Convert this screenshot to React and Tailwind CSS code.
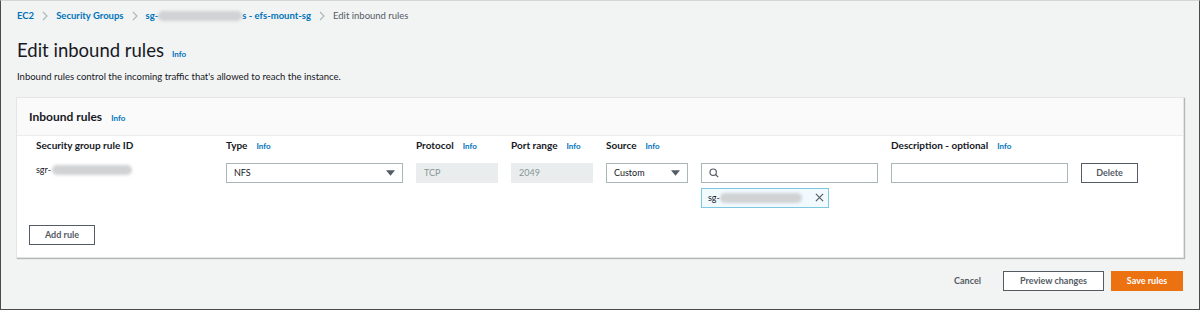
function Info({ className = "" }) {
  return <span className={`text-[8px] font-bold text-[#0073bb] ${className}`}>Info</span>;
}

function Blur({ className }) {
  return <span className={`inline-block h-[10px] rounded-full bg-[#d0d2d3] blur-[1.5px] ${className}`} />;
}

function Caret() {
  return (
    <svg viewBox="0 0 10 6" className="h-[6px] w-[9px]">
      <path d="M0 0h10L5 6z" fill="#545b64" />
    </svg>
  );
}

function Chevron() {
  return (
    <svg viewBox="0 0 6 10" className="h-[10px] w-[6px]" fill="none" stroke="#aab7b8" strokeWidth="1.1">
      <path d="M1 1l4 4-4 4" />
    </svg>
  );
}

function Header({ label, info, width }) {
  return (
    <div className={`flex shrink-0 items-center gap-[9px] ${width}`}>
      <span className="text-[10px] font-bold text-[#16191f]">{label}</span>
      {info && <Info />}
    </div>
  );
}

export default function App() {
  return (
    <div
      className="h-[310px] w-[1200px] overflow-hidden border-x border-b border-[#4b4b4b] border-t-[#d5d5d5] border-t bg-[#f2f3f3] text-[#16191f]"
      style={{ fontFamily: 'Lato, "Liberation Sans", sans-serif' }}
    >
      <nav className="flex items-center gap-[8px] pl-[16px] pt-[8px] text-[9.5px]">
        <span className="font-bold text-[#0073bb]">EC2</span>
        <Chevron />
        <span className="font-bold text-[#0073bb]">Security Groups</span>
        <Chevron />
        <span className="flex items-center font-bold text-[#0073bb]">
          sg-<Blur className="w-[84px]" />s - efs-mount-sg
        </span>
        <Chevron />
        <span className="text-[#545b64]">Edit inbound rules</span>
      </nav>

      <div className="mt-[16px] flex items-end gap-[8px] pl-[16px]">
        <h1 className="text-[18.5px] leading-[22px] text-[#16191f]">Edit inbound rules</h1>
        <Info className="mb-[1px]" />
      </div>
      <p className="mt-[9px] pl-[16px] text-[9.5px] text-[#16191f]">
        Inbound rules control the incoming traffic that's allowed to reach the instance.
      </p>

      <div className="mx-[15px] mt-[12px] h-[161px] border border-[#e4e6e6] bg-white shadow-[1px_1px_1px_rgba(0,0,0,0.25)]">
        <div className="flex h-[38px] items-center gap-[9px] border-b border-[#eaeded] bg-[#fafafa] pl-[12px] pt-[2px]">
          <span className="text-[12px] font-bold">Inbound rules</span>
          <Info className="mt-[2px]" />
        </div>

        <div className="pl-[19px] pt-[3px]">
          <div className="flex h-[14px] items-center">
            <Header label="Security group rule ID" width="w-[190px]" />
            <Header label="Type" info width="w-[190px]" />
            <Header label="Protocol" info width="w-[95px]" />
            <Header label="Port range" info width="w-[95px]" />
            <Header label="Source" info width="w-[285px]" />
            <Header label="Description - optional" info width="w-[190px]" />
          </div>

          <div className="mt-[10px] flex items-start">
            <div className="flex h-[14px] w-[190px] shrink-0 items-center text-[9px]">
              sgr-<Blur className="ml-[1px] w-[80px]" />
            </div>
            <div className="w-[190px] shrink-0">
              <div className="flex h-[20px] w-[177px] items-center justify-between border border-[#aab7b8] px-[7px] text-[9px]">
                NFS
                <Caret />
              </div>
            </div>
            <div className="w-[95px] shrink-0">
              <div className="flex h-[20px] w-[82px] items-center bg-[#eaeded] px-[8px] text-[9px] text-[#879596]">TCP</div>
            </div>
            <div className="w-[95px] shrink-0">
              <div className="flex h-[20px] w-[82px] items-center bg-[#eaeded] px-[8px] text-[9px] text-[#879596]">2049</div>
            </div>
            <div className="flex w-[285px] shrink-0 gap-[13px]">
              <div className="flex h-[20px] w-[82px] items-center justify-between border border-[#aab7b8] px-[7px] text-[9px]">
                Custom
                <Caret />
              </div>
              <div>
                <div className="flex h-[20px] w-[177px] items-center border border-[#aab7b8] px-[7px]">
                  <svg viewBox="0 0 12 12" className="h-[10px] w-[10px]" fill="none" stroke="#545b64" strokeWidth="1.4">
                    <circle cx="5" cy="5" r="3.8" />
                    <path d="M7.8 7.8L11 11" />
                  </svg>
                </div>
                <div className="mt-[5px] flex h-[20px] w-[128px] items-center justify-between border border-[#7fc6e3] bg-[#f1faff] pl-[6px] pr-[4px] text-[9px]">
                  <span className="flex items-center">
                    sg-<Blur className="w-[82px]" />
                  </span>
                  <svg viewBox="0 0 10 10" className="h-[9px] w-[9px]" stroke="#545b64" strokeWidth="1.3">
                    <path d="M1 1l8 8M9 1L1 9" />
                  </svg>
                </div>
              </div>
            </div>
            <div className="w-[190px] shrink-0">
              <div className="h-[20px] w-[177px] border border-[#aab7b8]" />
            </div>
            <button className="flex h-[20px] w-[57px] items-center justify-center border border-[#545b64] text-[9px] font-bold text-[#545b64]">
              Delete
            </button>
          </div>
        </div>

        <button className="ml-[12px] mt-[17px] flex h-[20px] w-[66px] items-center justify-center border border-[#545b64] text-[9px] font-bold text-[#545b64]">
          Add rule
        </button>
      </div>

      <div className="mr-[16px] mt-[13px] flex items-center justify-end">
        <span className="mr-[22px] text-[9px] font-bold text-[#545b64]">Cancel</span>
        <button className="flex h-[20px] w-[101px] items-center justify-center border border-[#545b64] bg-white text-[9px] font-bold text-[#545b64]">
          Preview changes
        </button>
        <button className="ml-[7px] flex h-[20px] w-[72px] items-center justify-center border border-[#ec7211] bg-[#ec7211] text-[9px] font-bold text-white">
          Save rules
        </button>
      </div>
    </div>
  );
}
